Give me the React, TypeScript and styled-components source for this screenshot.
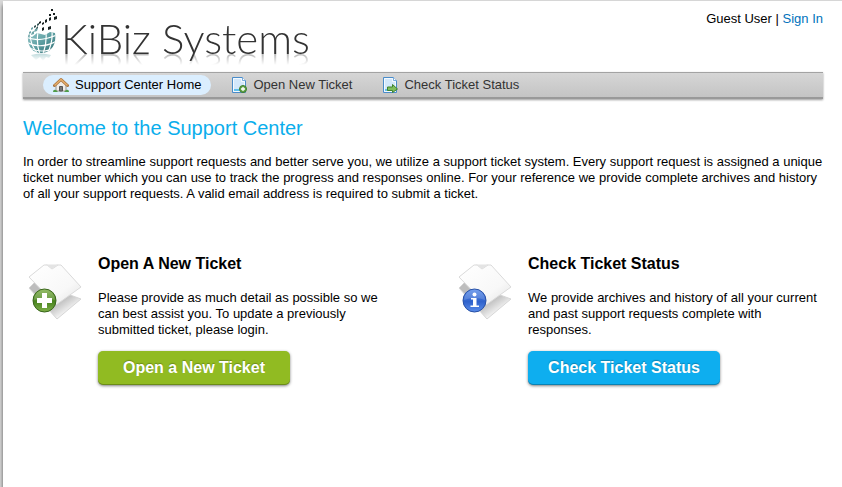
import React from "react";
import styled, { createGlobalStyle, css } from "styled-components";

const GlobalStyle = createGlobalStyle`
  * { box-sizing: border-box; }
  html { background: #d8d8d8; }
  body {
    margin: 0;
    color: #000;
    font: 13px/16px "Liberation Sans", Arial, Helvetica, sans-serif;
  }
`;

const Page = styled.div`
  min-height: calc(100vh - 1px);
  margin: 1px 0 0 3px;
  padding: 0 19px 40px 20px;
  background: #fff;
  box-shadow: 0 4px 4px rgba(0, 0, 0, 0.6);
`;

const Header = styled.header`
  display: flex;
  justify-content: space-between;
  align-items: flex-start;
  height: 71px;
`;

const Logo = styled.a`
  display: flex;
  color: #333;
  text-decoration: none;
`;

const LogoMark = styled.svg`
  display: block;
  width: 38px;
  height: 64px;
`;

const LogoName = styled.span`
  height: 66px;
  font: 300 42px/74px Lato, "Open Sans", sans-serif;
  -webkit-box-reflect: below -26px
    linear-gradient(transparent 42px, rgba(0, 0, 0, 0.35) 53px, transparent 54px);
`;

const UserBar = styled.div`
  padding-top: 10px;
`;

const SignIn = styled.a`
  color: #0072bc;
  text-decoration: none;
`;

const Nav = styled.nav`
  display: flex;
  align-items: center;
  gap: 10px;
  height: 27px;
  padding: 0 20px;
  border-top: 1px solid #a3a3a3;
  border-bottom: 2px solid #999;
  background: linear-gradient(#d6d6d6, #c4c4c4);
  box-shadow: 0 1px 2px rgba(0, 0, 0, 0.4);
`;

const NavLink = styled.a<{ $active?: boolean }>`
  display: flex;
  align-items: center;
  gap: 6px;
  height: 20px;
  padding: 0 10px;
  border-radius: 10px;
  color: #333;
  text-decoration: none;
  ${(p) => p.$active && css`
    background: #dbeefe;
    color: #000;
  `}
`;

const NavIcon = styled.svg`
  width: 16px;
  height: 16px;
  flex: none;
`;

const Title = styled.h1`
  margin: 16px 0 0;
  color: #0aaeec;
  font-size: 20px;
  font-weight: 400;
  line-height: 26px;
`;

const Intro = styled.p`
  margin: 13px 0 0;
`;

const Options = styled.div`
  display: grid;
  grid-template-columns: 1fr 1fr;
  gap: 60px;
  margin-top: 50px;
`;

const Option = styled.section`
  display: flex;
  align-items: flex-start;
  gap: 11px;
`;

const OptionIcon = styled.svg`
  width: 64px;
  height: 68px;
  flex: none;
`;

const OptionBody = styled.div`
  flex: 1;
`;

const OptionTitle = styled.h2`
  margin: 0;
  font-size: 16px;
  line-height: 24px;
`;

const OptionText = styled.p`
  min-height: 48px;
  margin: 14px 0 13px;
`;

const ActionButton = styled.button<{ $tone: "green" | "blue" }>`
  display: block;
  width: 192px;
  height: 34px;
  padding: 0;
  border: 0;
  border-radius: 5px;
  background: ${(p) => (p.$tone === "green" ? "#91bb22" : "#0eaeef")};
  box-shadow: inset 0 -1px 0 rgba(0, 0, 0, 0.25), 0 1px 3px rgba(0, 0, 0, 0.5);
  color: #fff;
  font: bold 16px/32px "Liberation Sans", Arial, Helvetica, sans-serif;
  text-shadow: 0 -1px 1px rgba(0, 0, 0, 0.25);
  cursor: pointer;
`;

const DropMark = () => (
  <LogoMark viewBox="0 0 38 64" aria-hidden="true">
    <defs>
      <linearGradient id="globe" x1="0" y1="0" x2="1" y2="1">
        <stop offset="0" stopColor="#9fcdcf" />
        <stop offset="0.5" stopColor="#5b9da0" />
        <stop offset="1" stopColor="#2e6b70" />
      </linearGradient>
      <linearGradient id="globeFade" x1="0" y1="0" x2="0" y2="1">
        <stop offset="0" stopColor="#7fb5b8" stopOpacity="0.5" />
        <stop offset="1" stopColor="#7fb5b8" stopOpacity="0" />
      </linearGradient>
      <clipPath id="globeClip">
        <path d="M5 35C4 44 9 52 18 52C27 52 34 45 32 32L27 31L22 34L14 32L9 36Z" />
      </clipPath>
    </defs>
    <g clipPath="url(#globeClip)">
      <path d="M4 30h30v23H4z" fill="url(#globe)" />
      <g fill="none" stroke="#fff" strokeWidth="1.2">
        <path d="M3 36Q15 42 34 34M3 41Q17 49 34 40M5 46Q19 54 33 46" />
        <path d="M7 32Q7 44 15 53M15 31Q13 43 17 53M23 31Q24 42 20 53M29 30Q30 42 24 53" />
      </g>
    </g>
    <g fill="#6fa5a8">
      <path d="M6 31l2-1v2l-2 1zM9 31l2-1v3l-3 1zM12 28l3-1-1 3-3 1zM8 27l2-1v2l-2 1zM5 35l1-2 1 1-1 3z" />
    </g>
    <g fill="#365454">
      <path d="M11 25l2-1v2l-2 1zM14 23l2-1v2l-2 1zM13 27l2-2v2l-2 1z" />
    </g>
    <g fill="#182020">
      <rect x="28" y="8" width="2" height="2" />
      <rect x="30" y="12" width="2" height="2" />
      <rect x="26" y="13" width="2" height="2" />
      <path d="M31 16l3-1v3l-3 1zM26 17l2-1v3l-2 1zM22 19l2-1v3l-2 1zM19 22l2-1v2l-2 1zM16 21l2-1v2l-2 1zM25 26l3-1v3l-3 1zM19 27l2-1v3l-2 1z" />
    </g>
    <path d="M8 54q10-3 20 0l-2 3-3-1-3 4-3-4-4 3z" fill="url(#globeFade)" />
  </LogoMark>
);

const HomeIcon = () => (
  <NavIcon viewBox="0 0 16 16" aria-hidden="true">
    <path d="M3 8v6h10V8L8 3z" fill="#f0eeea" stroke="#9b958d" />
    <path d="M6.500 14V9.500h3V14z" fill="#777" stroke="#555" />
    <path d="M1.500 8.500L8 2.500l6.500 6" fill="none" stroke="#a8713a" strokeWidth="3" strokeLinejoin="round" strokeLinecap="round" />
    <path d="M1.500 8.500L8 2.500l6.500 6" fill="none" stroke="#e5ae6c" strokeWidth="1.600" />
    <path d="M0 15q0-3 3-2l2 2zM11 15l2-2q3-1 3 2z" fill="#4f9c49" />
  </NavIcon>
);

const PageShape = () => (
  <>
    <path d="M1.500.5h10l3 3v12h-13z" fill="#d3e8fb" stroke="#4a8cc9" />
    <path d="M2.500 1.500h8v3h3v10h-11z" fill="none" stroke="#f4faff" />
    <path d="M11.500.5v3h3" fill="#fff" stroke="#77aadd" />
    <path d="M3 12h6v2H3z" fill="#5fc0ee" />
  </>
);

const NewTicketIcon = () => (
  <NavIcon viewBox="0 0 16 16" aria-hidden="true">
    <PageShape />
    <circle cx="12" cy="12" r="3.500" fill="#65a64c" stroke="#3d7c2c" />
    <path d="M12 10v4M10 12h4" stroke="#fff" strokeWidth="1.300" />
  </NavIcon>
);

const StatusIcon = () => (
  <NavIcon viewBox="0 0 16 16" aria-hidden="true">
    <PageShape />
    <path d="M5.500 10h5V7.500l5 4.500-5 3.500v-2h-5z" fill="#80be5c" stroke="#3f832d" />
  </NavIcon>
);

const Papers = ({ kind }: { kind: "new" | "status" }) => {
  const badge = `${kind}Badge`;
  const paper = `${kind}Paper`;
  const under = `${kind}Under`;
  const [light, dark, edge] =
    kind === "new" ? ["#7fb04a", "#4a8420", "#39651c"] : ["#5a8dea", "#2f62cc", "#2850a5"];
  return (
    <OptionIcon viewBox="0 0 64 68" aria-hidden="true">
      <defs>
        <linearGradient id={badge} x1="0" y1="0" x2="0" y2="1">
          <stop offset="0" stopColor={light} />
          <stop offset="0.55" stopColor={dark} />
          <stop offset="1" stopColor={light} />
        </linearGradient>
        <linearGradient id={paper} x1="0" y1="0" x2="1" y2="1">
          <stop offset="0" stopColor="#fff" />
          <stop offset="0.65" stopColor="#f8f8f8" />
          <stop offset="1" stopColor="#e2e2e2" />
        </linearGradient>
        <linearGradient id={under} gradientUnits="userSpaceOnUse" x1="38" y1="48" x2="46" y2="60">
          <stop offset="0" stopColor="#bdbdbd" />
          <stop offset="1" stopColor="#f8f8f8" />
        </linearGradient>
      </defs>
      <path d="M6 36l6-6 46 17L34 67z" fill={`url(#${under})`} stroke="#d6d6d6" strokeLinejoin="round" />
      <path d="M6 25L21 13h3l5 4 6-4h3l20 22-25 18z" fill={`url(#${paper})`} stroke="#dadada" strokeLinejoin="round" />
      <path d="M22 12q7 1 14 0l-7 5z" fill="#e4e4e4" />
      <circle cx="21.500" cy="48.500" r="11.500" fill={`url(#${badge})`} stroke={edge} />
      <path d="M11 48a10.500 10.500 0 0121 0q-10-4-21 0z" fill="#fff" opacity="0.16" />
      {kind === "new" ? (
        <path d="M19 41h5v5h5v5h-5v5h-5v-5h-5v-5h5z" fill="#fff" />
      ) : (
        <g fill="#fff">
          <circle cx="21.500" cy="42.500" r="2" />
          <path d="M18 46h5.500v7.500H26V55h-8.500v-1.500H20v-6h-2z" />
        </g>
      )}
    </OptionIcon>
  );
};

export default function App() {
  return (
    <>
      <GlobalStyle />
      <Page>
        <Header>
          <Logo href="#home">
            <DropMark />
            <LogoName>KiBiz Systems</LogoName>
          </Logo>
          <UserBar>
            Guest User | <SignIn href="#login">Sign In</SignIn>
          </UserBar>
        </Header>
        <Nav>
          <NavLink href="#home" $active>
            <HomeIcon />
            Support Center Home
          </NavLink>
          <NavLink href="#open">
            <NewTicketIcon />
            Open New Ticket
          </NavLink>
          <NavLink href="#status">
            <StatusIcon />
            Check Ticket Status
          </NavLink>
        </Nav>
        <main>
          <Title>Welcome to the Support Center</Title>
          <Intro>
            In order to streamline support requests and better serve you, we utilize a support
            ticket system. Every support request is assigned a unique ticket number which you can
            use to track the progress and responses online. For your reference we provide complete
            archives and history of all your support requests. A valid email address is required to
            submit a ticket.
          </Intro>
          <Options>
            <Option>
              <Papers kind="new" />
              <OptionBody>
                <OptionTitle>Open A New Ticket</OptionTitle>
                <OptionText>
                  Please provide as much detail as possible so we can best assist you. To update a
                  previously submitted ticket, please login.
                </OptionText>
                <ActionButton type="button" $tone="green">Open a New Ticket</ActionButton>
              </OptionBody>
            </Option>
            <Option>
              <Papers kind="status" />
              <OptionBody>
                <OptionTitle>Check Ticket Status</OptionTitle>
                <OptionText>
                  We provide archives and history of all your current and past support requests
                  complete with responses.
                </OptionText>
                <ActionButton type="button" $tone="blue">Check Ticket Status</ActionButton>
              </OptionBody>
            </Option>
          </Options>
        </main>
      </Page>
    </>
  );
}
